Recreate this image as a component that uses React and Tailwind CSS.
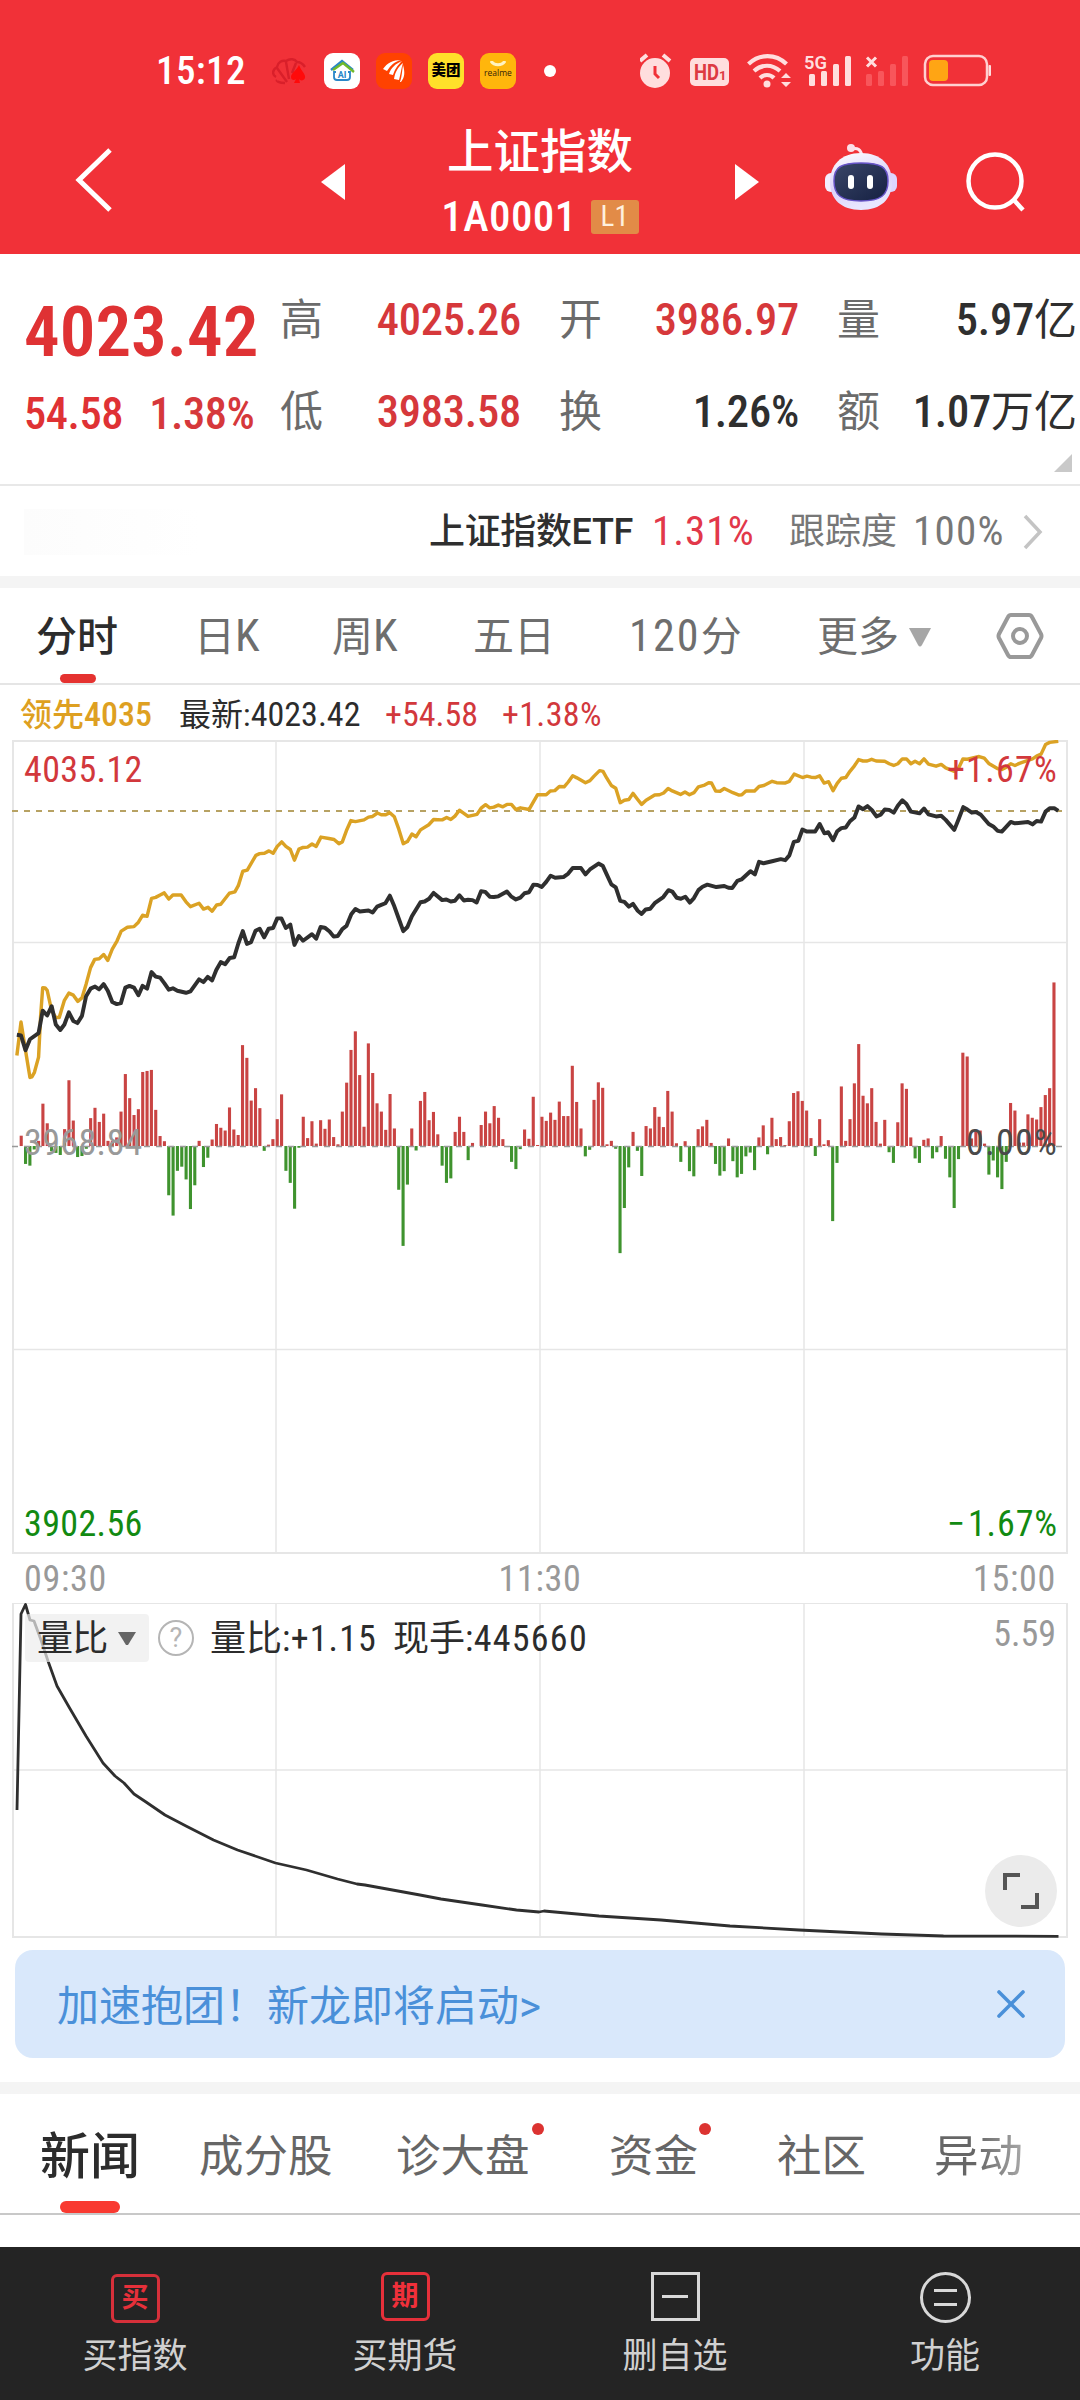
import { X } from "lucide-react";

// one value per minute, positive = buying, negative = selling
const momentum = [
  0, 30, -52, -57, -10, 15, 123, 66, -15, -20, -26, 49, 191, 74, -32, -29, -8, 81, 111, 70,
  94, 15, 15, 25, 100, 209, 139, 90, 107, 215, 218, 221, 105, 29, 14, -143, -202, -72, -60, -97,
  -183, -114, 15, -61, -34, 19, 64, 53, 45, 112, 48, 32, 293, 256, 132, 168, 110, -14, 4, 20,
  78, 150, -72, -107, -182, -5, 85, 23, 72, 7, 75, 50, 77, 26, 5, 100, 184, 279, 333, 206,
  56, 298, 212, 124, 100, 47, 151, 51, -127, -290, -112, 51, -13, 131, 157, 75, 99, 34, -57, -107,
  -94, 41, 85, 41, -41, 9, 0, 61, 100, 66, 116, 82, 20, -3, -46, -67, -9, 48, 21, 143,
  3, 85, 73, 97, 76, 129, 87, 87, 233, 128, 51, -30, -11, 134, 185, 169, 5, 15, -8, -311,
  -180, -62, 41, -14, -87, 58, 51, 113, 85, 55, 160, 100, 8, -46, 14, -73, -88, 49, 57, 76,
  9, -52, -86, -73, 22, -44, -91, -81, -30, -19, -70, 25, 60, -24, 82, 20, 26, 3, 72, 154,
  159, 131, 103, 23, -29, 78, 5, 17, -218, -49, 173, 15, 78, 182, 296, 146, 124, 168, 70, 7,
  76, -18, -49, 69, 182, 166, 25, -36, -49, 18, 22, -36, -18, 29, -37, -91, -180, -38, 271, 260,
  22, 42, 45, 7, -83, -42, -91, -125, -46, 125, 103, 10, 10, 92, 82, 77, 113, 148, 168, 475,
];

const leadLine =
  "49,945 61,848 74,930 87,1009 93,1007 100,994 112,950 118,830 124,748 131,749 137,756 150,815 162,835 172,835 187,785 200,764 213,770 226,788 238,778 250,738 263,690 275,666 288,664 301,652 313,669 326,636 340,612 352,584 370,573 389,571 402,558 414,538 427,541 440,489 452,486 465,479 477,473 490,491 502,479 526,479 540,499 553,513 578,503 591,520 604,515 616,526 629,508 641,506 666,474 682,470 692,452 705,410 718,407 743,364 754,359 768,358 781,351 793,358 805,338 818,325 830,338 843,347 855,378 868,346 880,341 893,340 906,331 918,338 932,311 955,315 970,318 984,330 994,325 1006,292 1019,263 1032,266 1057,261 1070,253 1082,251 1096,241 1107,246 1120,246 1132,240 1145,252 1158,288 1171,330 1183,324 1196,302 1208,310 1221,290 1245,275 1259,260 1284,261 1297,254 1309,260 1321,250 1334,233 1347,242 1359,251 1385,245 1397,227 1410,217 1422,226 1434,224 1447,218 1460,223 1472,216 1485,216 1498,231 1511,226 1536,231 1548,210 1561,188 1586,188 1598,177 1611,176 1624,164 1638,165 1650,151 1663,133 1675,139 1700,153 1713,147 1725,134 1741,118 1751,120 1762,140 1775,161 1788,169 1801,211 1813,204 1826,202 1838,184 1851,201 1863,216 1876,204 1901,189 1915,188 1927,183 1940,170 1952,177 1976,187 1989,180 2002,188 2015,182 2028,165 2046,160 2058,153 2066,154 2078,177 2091,178 2103,170 2128,182 2146,189 2154,188 2166,177 2191,177 2204,164 2218,161 2242,149 2255,153 2279,154 2292,149 2306,128 2330,138 2343,134 2355,137 2367,138 2380,133 2393,154 2406,150 2419,176 2431,155 2443,140 2456,138 2468,120 2481,104 2493,86 2506,90 2518,90 2531,85 2544,90 2569,91 2582,98 2595,103 2607,98 2620,84 2632,84 2645,98 2657,91 2670,98 2683,84 2696,99 2718,105 2733,100 2746,110 2771,120 2783,112 2796,84 2809,85 2843,77 2858,82 2871,97 2896,112 2909,115 2922,108 2935,98 2947,103 2960,97 2985,88 2998,84 3010,76 3023,70 3036,42 3048,36 3073,33";

const priceLine =
  "49,885 61,887 74,930 87,898 112,880 124,815 137,829 150,802 162,855 175,871 187,855 200,820 213,845 225,851 238,830 250,773 263,751 276,745 288,753 301,738 313,757 326,790 339,796 351,793 364,748 376,743 389,748 402,770 414,743 427,751 440,703 452,716 465,719 477,735 490,754 502,750 515,757 540,763 553,759 578,724 591,732 603,717 616,727 628,697 641,674 654,680 667,662 680,660 692,620 705,584 717,621 729,616 742,583 754,577 767,602 780,577 793,575 805,547 817,547 830,575 843,565 855,624 868,598 880,612 906,593 918,606 931,572 943,574 957,585 969,600 981,598 994,578 1006,569 1020,535 1032,520 1045,527 1070,524 1082,530 1095,513 1107,508 1119,503 1132,481 1145,512 1158,548 1171,584 1183,572 1196,541 1221,500 1233,498 1246,490 1259,473 1284,494 1296,492 1309,498 1321,496 1334,480 1347,495 1359,493 1372,494 1384,501 1397,468 1409,470 1422,484 1434,485 1447,483 1472,469 1485,484 1498,492 1511,487 1523,474 1536,471 1549,449 1561,450 1573,456 1586,441 1599,423 1612,429 1636,427 1650,417 1663,401 1687,401 1700,419 1713,405 1738,388 1750,394 1762,420 1775,448 1788,457 1801,496 1813,499 1826,513 1838,505 1851,524 1863,534 1875,521 1888,519 1901,503 1926,485 1941,465 1952,469 1965,487 1977,490 1990,484 2003,501 2015,488 2028,465 2040,455 2054,449 2080,456 2103,453 2115,458 2126,459 2141,438 2153,434 2179,410 2192,419 2204,383 2217,387 2242,381 2267,375 2280,378 2292,364 2305,325 2318,322 2330,289 2343,295 2367,295 2380,273 2394,300 2405,297 2419,320 2431,294 2443,285 2456,283 2468,265 2481,254 2493,222 2506,230 2519,221 2532,233 2545,251 2557,246 2569,231 2582,232 2595,240 2607,220 2620,204 2632,215 2645,237 2670,242 2683,228 2696,245 2718,251 2733,249 2746,261 2771,290 2784,258 2797,224 2809,231 2822,240 2834,238 2848,246 2871,273 2884,280 2897,293 2909,295 2935,267 2947,271 2985,267 2998,274 3010,264 3023,266 3036,237 3048,227 3061,227 3073,235";

const volumeLine =
  "17,207 21,11 25.5,1.5 30,17 34,18 41,37 48,58 57,83 69,104 86,133 103,160 115,173 124,180 134,191 146,199 165,212 186,223 213.5,237 237.5,247 275.5,260 306.5,267 337.5,276 357,281 365,282 420,292 441,296 482,302 516.5,307 539,309 544,308 599,313 661,317 730,323 799,327 881.5,331 943.5,333 1058.5,333.3";

const quotes = [
  { label: "高", value: "4025.26", red: true },
  { label: "开", value: "3986.97", red: true },
  { label: "量", value: "5.97", unit: "亿" },
  { label: "低", value: "3983.58", red: true },
  { label: "换", value: "1.26%" },
  { label: "额", value: "1.07", unit: "万亿" },
];

function Num({ className = "", children }) {
  return <span className={`font-['Roboto_Condensed'] ${className}`}>{children}</span>;
}

function StatusBar() {
  return (
    <div className="flex h-[142px] items-center pl-[156px]">
      <Num className="w-[116px] text-[39px] font-medium tracking-[0.01em]">15:12</Num>
      <div className="flex items-center gap-4">
        <svg width="36" height="36" viewBox="0 0 36 36" fill="none" stroke="#d91f2a" strokeWidth="2.4">
          <path d="M13 30C7 30 4 28 5 27M4 24C0 22 0 17 5 14c1-5 5-7 9-6 4-3 9-2 11 1 4 0 6 2 8 5" />
          <path d="M15 29 5 15M17 26 14 9M20 20 24 10" />
          <path d="M27 12c2 6 7 9 6 13-1 3-5 3-6 1l1 4h-6l2-4c-2 2-5 1-5-2 0-4 6-7 8-12z" fill="#ff0a0a" stroke="none" />
        </svg>
        <svg width="36" height="36" viewBox="0 0 36 36" fill="none">
          <rect width="36" height="36" rx="9" fill="#fff" />
          <path d="M7 17 18 8l11 9" stroke="#2a86c8" strokeWidth="2.4" />
          <path d="M9 17l10-7 11 9" stroke="#6fb92c" strokeWidth="2.4" />
          <path d="M12 19h-2v5c0 2 1 3 3 3h10c2 0 3-1 3-3v-5h-2" stroke="#2a86c8" strokeWidth="1.8" />
          <text x="18" y="25" textAnchor="middle" fontSize="9" fontWeight="700" fill="#2a86c8">AI</text>
        </svg>
        <svg width="36" height="36" viewBox="0 0 36 36" fill="#fff">
          <rect width="36" height="36" rx="9" fill="#ff4200" />
          <path d="M7 16C11 10 17 7 25 7c-7 2-10 5-14 11z" />
          <path d="M13 21c2-6 6-10 13-13-5 5-7 8-9 14z" />
          <path d="M18 26c1-7 4-12 9-16-2 6-2 10-4 17z" />
          <path d="M24 29c2-6 2-11 3-17 2 7 2 12-2 17z" />
        </svg>
        <div className="flex size-9 items-center justify-center rounded-[9px] bg-[#ffe02a] text-[14.5px] font-black text-black">美团</div>
        <div className="flex size-9 flex-col items-center rounded-[9px] bg-[#ffb60c] pt-2">
          <svg width="16" height="6" viewBox="0 0 16 6"><path d="M1 0c3 5 11 5 14 0" fill="none" stroke="#fff3c0" strokeWidth="3" /></svg>
          <span className="pt-0.5 font-[Open_Sans] text-[8.5px] font-medium leading-none text-[#33200a]">realme</span>
        </div>
      </div>
      <div className="ml-[28px] size-3 rounded-full bg-white" />
      <svg className="ml-[84px]" width="360" height="48" viewBox="640 47 360 48" fill="#ffdede">
        <circle cx="655" cy="73" r="15" />
        <path d="M640 61l7-6M670 61l-7-6" stroke="#ffdede" strokeWidth="4" />
        <path d="M655 66v8l4 4" fill="none" stroke="#f13138" strokeWidth="3" />
        <rect x="690" y="58" width="39" height="28" rx="5" />
        <text x="694" y="80" fontSize="22" fontWeight="700" textLength="25" lengthAdjust="spacingAndGlyphs" fill="#dd3a42">HD</text>
        <text x="719" y="80" fontSize="13" fontWeight="700" fill="#dd3a42">1</text>
        <circle cx="767" cy="84" r="3.5" />
        <g fill="none" stroke="#ffdede" strokeWidth="4.2">
          <path d="M748.5 64c11-10.5 27-10.5 38 0M754 71c8-7 18-7 26 0M760 78c4-4 10-4 14 0" />
        </g>
        <path d="M781 78l5-5 5 5zM781 82h10l-5 5z" />
        <text x="804" y="69" fontSize="19" fontWeight="600" textLength="23" lengthAdjust="spacingAndGlyphs">5G</text>
        <rect x="809" y="74" width="6" height="12" rx="1.5" />
        <rect x="821" y="71" width="6" height="15" rx="1.5" />
        <rect x="833" y="64" width="6" height="22" rx="1.5" />
        <rect x="845" y="56" width="6" height="30" rx="1.5" />
        <path d="M867 57.5l9 9M876 57.5l-9 9" stroke="#ffdede" strokeWidth="3" />
        <g fill="#f8565b">
          <rect x="866" y="74" width="6" height="12" rx="1.5" />
          <rect x="878" y="71" width="6" height="15" rx="1.5" />
          <rect x="890" y="64" width="6" height="22" rx="1.5" />
          <rect x="902" y="56" width="6" height="30" rx="1.5" />
        </g>
        <rect x="925" y="56" width="62" height="29" rx="8" fill="none" stroke="#ffd0d0" strokeWidth="2.5" />
        <rect x="929" y="60" width="19" height="21" rx="4" fill="#ffa514" />
        <rect x="988.5" y="65" width="2.5" height="11" rx="1" />
      </svg>
    </div>
  );
}

function Robot() {
  return (
    <svg width="74" height="70" viewBox="0 0 74 70">
      <defs>
        <linearGradient id="shell" x1="0" y1="0" x2="0.3" y2="1">
          <stop offset="0" stopColor="#fff" />
          <stop offset="0.6" stopColor="#dcd2fa" />
          <stop offset="1" stopColor="#e8e6ff" />
        </linearGradient>
        <linearGradient id="visor" x1="0" y1="0" x2="1" y2="1">
          <stop offset="0" stopColor="#3a4668" />
          <stop offset="1" stopColor="#152042" />
        </linearGradient>
      </defs>
      <path d="M27 6c7-2 10 1 11 7" fill="none" stroke="#ffe5ee" strokeWidth="3" />
      <circle cx="27" cy="5" r="4" fill="#fbdfe8" />
      <rect x="1" y="30" width="12" height="19" rx="6" fill="#f3eeff" />
      <rect x="61" y="30" width="12" height="19" rx="6" fill="#ddd5ff" />
      <path d="M37 10c20 0 31 12 31 29S57 67 37 67 6 56 6 39s11-29 31-29z" fill="url(#shell)" />
      <path d="M37 20c20 0 27 4 27 18S57 58 37 58 10 52 10 38s7-18 27-18z" fill="url(#visor)" stroke="#6754c8" strokeWidth="1.5" />
      <rect x="24" y="32" width="6" height="14" rx="3" fill="#fff" />
      <rect x="43" y="32" width="6" height="14" rx="3" fill="#fff" />
    </svg>
  );
}

function Header() {
  return (
    <header className="h-[254px] bg-[#f13138] text-white">
      <StatusBar />
      <div className="-mt-[23px] flex h-[126px] items-center">
        <svg className="ml-[73px]" width="42" height="70" viewBox="0 0 42 70" fill="none" stroke="#fff" strokeWidth="5">
          <path d="M37 3 6 33l31 30" />
        </svg>
        <svg className="ml-[206px]" width="24" height="36" viewBox="0 0 24 36"><path d="M24 0v36L0 18z" fill="#fff" /></svg>
        <div className="flex w-[390px] flex-col items-center">
          <h1 className="-mt-2 text-[46.5px] font-medium leading-[56px]">上证指数</h1>
          <div className="-mb-[9px] mt-3 flex h-[50px] items-center gap-[14px]">
            <Num className="text-[43px] font-medium leading-none tracking-[0.01em]">1A0001</Num>
            <span className="flex h-[34px] w-12 items-center justify-center rounded-[3px] bg-[#e28b47] text-[#fff0de]">
              <Num className="text-[29px]">L1</Num>
            </span>
          </div>
        </div>
        <svg width="24" height="36" viewBox="0 0 24 36"><path d="M0 0v36l24-18z" fill="#fff" /></svg>
        <div className="-mt-2 ml-[65px]"><Robot /></div>
        <svg className="ml-[65px]" width="64" height="64" viewBox="0 0 64 64" fill="none" stroke="#fff" strokeWidth="4.5">
          <circle cx="32" cy="31" r="26.5" />
          <path d="M50 49l10 11" />
        </svg>
      </div>
    </header>
  );
}

function QuoteSummary() {
  return (
    <section className="relative flex h-[232px] border-b-2 border-[#e8e8e8] pl-6 pt-5 text-[#2f2f2f]">
      <div className="w-[256px] text-[#df3234]">
        <Num className="block h-[90px] pt-[22px] text-[71px] font-semibold leading-[72px]">4023.42</Num>
        <div className="flex h-[92px] items-center gap-[26px] pt-2 text-[44.5px] font-medium tracking-[-0.01em]">
          <Num>54.58</Num>
          <Num className="text-[#d6383b]">1.38%</Num>
        </div>
      </div>
      <div className="grid h-[184px] grid-cols-[241px_240px_240px] gap-x-[38px]">
        {quotes.map((q) => (
          <div key={q.label} className="flex items-center justify-between">
            <span className="text-[43px] text-[#6b6b6b]">{q.label}</span>
            <span className={q.red ? "text-[44.5px] font-medium text-[#d6383b]" : "text-[44.5px] font-medium"}>
              <Num className="tracking-[-0.005em]">{q.value}</Num>
              <span className="text-[43px] font-normal">{q.unit}</span>
            </span>
          </div>
        ))}
      </div>
      <svg className="absolute bottom-3 right-2" width="18" height="18" viewBox="0 0 18 18"><path d="M18 0v18H0z" fill="#c9c9c9" /></svg>
    </section>
  );
}

function EtfRow() {
  return (
    <div className="flex h-[90px] items-center pt-0.5 text-[36px] text-[#2f2f2f]">
      <div className="ml-6 h-[46px] w-[176px] bg-linear-to-r from-[#fcfcfc] to-white" />
      <span className="ml-[229px] w-[223px] font-medium tracking-[-0.01em]">上证指数ETF</span>
      <Num className="w-[137px] text-[41px] tracking-[0.025em] text-[#e2384a]">1.31%</Num>
      <span className="w-[124px] text-[#777]">跟踪度</span>
      <Num className="w-[109px] text-[41px] tracking-[0.03em] text-[#777]">100%</Num>
      <svg width="22" height="36" viewBox="0 0 22 36" fill="none" stroke="#c4c4c4" strokeWidth="3.5"><path d="M3 2l15 16L3 34" /></svg>
    </div>
  );
}

function PeriodTabs() {
  return (
    <nav className="grid h-[97px] grid-cols-[158px_138px_141px_156px_188px_92px_87px_48px] items-center border-b-2 border-[#e5e5e5] pl-9 text-[41px] text-[#6e6e6e] *:pt-1">
      <span className="relative flex h-full items-center font-medium text-[#2c2c2c]">
        分时
        <i className="absolute bottom-0 left-6 h-[9px] w-9 rounded-full bg-[#e53230]" />
      </span>
      <span>日<Num className="text-[45px] leading-none">K</Num></span>
      <span>周<Num className="text-[45px] leading-none">K</Num></span>
      <span>五日</span>
      <span><Num className="text-[44px] leading-none tracking-[0.05em]">120</Num>分</span>
      <span>更多</span>
      <svg width="22" height="23" viewBox="0 0 22 19"><path d="M0 0h22L13 17q-2 3-4 0z" fill="#a6a6a6" /></svg>
      <svg className="-mt-1" width="48" height="52" viewBox="0 0 48 48" fill="none" stroke="#999" strokeWidth="4">
        <path d="M15 3h18q2 0 3 2l9 17q1 2 0 4l-9 17q-1 2-3 2H15q-2 0-3-2L3 26q-1-2 0-4l9-17q1-2 3-2z" />
        <circle cx="24" cy="24" r="7" />
      </svg>
    </nav>
  );
}

function PriceChart() {
  return (
    <section className="text-[#2c2c2c]">
      <div className="flex h-[55px] items-center pl-5 pt-1 text-[32px]">
        <span className="w-[159px] font-medium text-[#dea021]">领先<Num className="text-[34px]">4035</Num></span>
        <span className="w-[206px]">最新:<Num className="text-[34px] font-[450]">4023.42</Num></span>
        <Num className="w-[117px] text-[34px] font-[450] text-[#d2383c]">+54.58</Num>
        <Num className="text-[34px] font-[450] tracking-[0.01em] text-[#d2383c]">+1.38%</Num>
      </div>
      <div className="relative h-[814px] text-[36px] font-[450] leading-none">
        <svg width="1080" height="814" viewBox="0 740 1080 814">
          <g fill="none" stroke="#e6e6e6" strokeWidth="2">
            <rect x="13" y="741" width="1054" height="812" />
            <path d="M276 740v813M540 740v813M804 740v813" strokeWidth="1.5" />
            <path d="M13 942.5h1054M13 1349.5h1054" strokeWidth="1.5" />
          </g>
          <path d="M12 811h1050" stroke="#b7a263" strokeWidth="2" strokeDasharray="6 6" />
          <g transform="translate(0 730) scale(0.34439)" fill="none" strokeLinejoin="round">
            {momentum.map((v, i) => (
              <rect
                key={i}
                x={44.5 + i * 12.6}
                y={v > 0 ? 1208 - v : 1208}
                width="9"
                height={Math.abs(v)}
                fill={v > 0 ? "#c94443" : "#3f932e"}
              />
            ))}
            <polyline points={leadLine} stroke="#dba224" strokeWidth="10" />
            <polyline points={priceLine} stroke="#2f2f2f" strokeWidth="11.5" />
          </g>
          <path d="M12 1146.5h1050" stroke="#999" strokeWidth="1.5" strokeDasharray="6 6" />
        </svg>
        <Num className="absolute left-6 top-[12px] tracking-[0.01em] text-[#d2383c]">4035.12</Num>
        <Num className="absolute right-[22px] top-[12px] tracking-[0.035em] text-[#d2383c]">+1.67%</Num>
        <Num className="absolute left-6 top-[385px] tracking-[0.01em] text-[#999]">3968.84</Num>
        <Num className="absolute right-[22px] top-[385px] tracking-[0.035em] text-[#4a4a4a]">0.00%</Num>
        <Num className="absolute left-6 top-[766px] tracking-[0.01em] text-[#128a12]">3902.56</Num>
        <Num className="absolute right-[22px] top-[766px] tracking-[0.025em] text-[#128a12]"><span className="mr-0.5">−</span>1.67%</Num>
      </div>
      <div className="flex h-[49px] items-center justify-between px-6 text-[36px] tracking-[0.02em] text-[#999]">
        <Num>09:30</Num>
        <Num>11:30</Num>
        <Num>15:00</Num>
      </div>
    </section>
  );
}

function VolumeChart() {
  return (
    <section className="relative h-[347px] text-[#2c2c2c]">
      <svg width="1080" height="336" viewBox="0 0 1080 336" fill="none">
        <g stroke="#e6e6e6" strokeWidth="2">
          <rect x="13" y="0" width="1054" height="334" />
          <path d="M276 0v334M540 0v334M804 0v334M13 167h1054" strokeWidth="1.5" />
        </g>
        <polyline points={volumeLine} stroke="#2f2f2f" strokeWidth="2.8" strokeLinejoin="round" />
      </svg>
      <div className="absolute left-[25px] top-[11px] flex h-12 items-center text-[36px]">
        <span className="flex h-12 w-[124px] items-center gap-2.5 rounded bg-[#ececec]/70 pl-3 pt-0.5">
          <span className="tracking-[-0.02em]">量比</span>
          <svg width="18" height="14" viewBox="0 0 18 14"><path d="M0 0h18l-8 13h-2z" fill="#666" /></svg>
        </span>
        <span className="ml-[9px] flex size-9 items-center justify-center rounded-full border-[2.5px] border-[#b5b5b5] text-[27px] text-[#b5b5b5]">?</span>
        <span className="ml-4 w-[183px] pt-0.5">量比:<Num className="font-[450] tracking-[0.03em]">+1.15</Num></span>
        <span className="pt-0.5">现手:<Num className="font-[450] tracking-[0.035em]">445660</Num></span>
      </div>
      <Num className="absolute right-6 top-[13px] text-[36px] leading-none text-[#999]">5.59</Num>
      <div className="absolute left-[985px] top-[252px] flex size-[72px] items-center justify-center rounded-full bg-[#ebebeb]">
        <svg width="36" height="38" viewBox="0 0 36 38" fill="none" stroke="#555" strokeWidth="4">
          <path d="M2 18V3h15M34 21v14H18" />
        </svg>
      </div>
    </section>
  );
}

function NewsTabs() {
  return (
    <nav className="grid h-[121px] grid-cols-[159px_197px_213px_168px_157px_100px] items-center border-b-2 border-[#c8c8c8] pl-10 text-[44.5px] text-[#666] *:pt-2">
      <span className="relative flex h-full items-center text-[50px] font-medium text-[#2c2c2c]">
        新闻
        <i className="absolute bottom-0 left-5 h-3 w-[60px] rounded-full bg-[#f93a31]" />
      </span>
      <span>成分股</span>
      <span className="relative">
        诊大盘
        <i className="absolute left-[136px] top-[7px] size-3 rounded-full bg-[#dc3331]" />
      </span>
      <span className="relative">
        资金
        <i className="absolute left-[90px] top-[7px] size-3 rounded-full bg-[#dc3331]" />
      </span>
      <span>社区</span>
      <span className="bg-linear-to-r from-[#666] from-40% to-[#b8b8b8] bg-clip-text text-transparent">异动</span>
    </nav>
  );
}

function BottomBar() {
  return (
    <footer className="grid h-[153px] grid-cols-4 bg-[#242424] pt-[25px] text-[35px] text-[#d0d0d0]">
      <div className="flex flex-col items-center">
        <span className="mt-0.5 flex size-[49px] items-center justify-center rounded-[6px] border-3 border-[#d6303a] text-[27px] font-bold text-[#e6303a]">买</span>
        <span className="mt-[10px] leading-[48px]">买指数</span>
      </div>
      <div className="flex flex-col items-center">
        <span className="flex size-[49px] items-center justify-center rounded-[6px] border-3 border-[#e6303a] text-[27px] font-bold text-[#f0303a]">期</span>
        <span className="mt-3 leading-[48px]">买期货</span>
      </div>
      <div className="flex flex-col items-center">
        <span className="flex size-[49px] items-center justify-center border-3 border-[#d8d8d8]">
          <i className="h-[3px] w-[26px] bg-[#d8d8d8]" />
        </span>
        <span className="mt-3 leading-[48px]">删自选</span>
      </div>
      <div className="flex flex-col items-center">
        <span className="flex size-[51px] flex-col items-center justify-center gap-[11px] rounded-full border-3 border-[#d8d8d8]">
          <i className="h-[3px] w-[23px] bg-[#d8d8d8]" />
          <i className="h-[3px] w-[23px] bg-[#d8d8d8]" />
        </span>
        <span className="mt-[10px] leading-[48px]">功能</span>
      </div>
    </footer>
  );
}

export default function App() {
  return (
    <div className="h-[2400px] w-[1080px] overflow-hidden bg-white font-[Roboto,'Noto_Sans_CJK_SC',sans-serif]">
      <Header />
      <QuoteSummary />
      <EtfRow />
      <div className="h-3 bg-[#f4f4f4]" />
      <PeriodTabs />
      <PriceChart />
      <VolumeChart />
      {/* promo banner */}
      <div className="mx-[15px] flex h-[108px] items-center justify-between rounded-[18px] bg-[#d9e8fb] pl-[42px] pr-[30px] text-[42px] text-[#4a90d9]">
        <span className="pt-1">加速抱团！新龙即将启动&gt;</span>
        <X className="size-[48px]" strokeWidth={1.8} />
      </div>
      <div className="mt-6 h-3 bg-[#f4f4f4]" />
      <NewsTabs />
      <div className="h-8" />
      <BottomBar />
    </div>
  );
}
